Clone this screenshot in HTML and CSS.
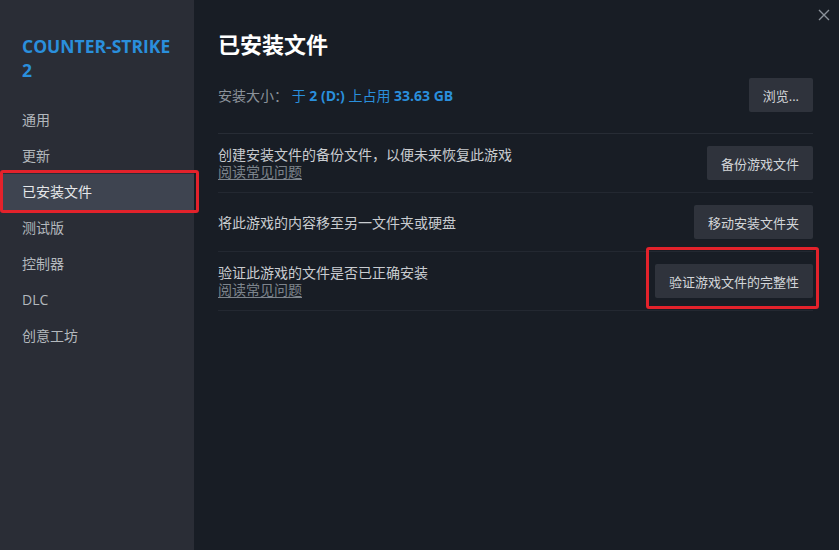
FILE: index.html
```html
<!DOCTYPE html>
<html lang="zh-CN">
<head>
<meta charset="utf-8">
<title>已安装文件</title>
<link rel="stylesheet" href="styles.css">
</head>
<body>
<div class="window">
  <aside class="sidebar">
    <div class="game-title"><span class="nowrap">COUNTER-STRIKE</span> 2</div>
    <nav class="nav">
      <div class="nav-item">通用</div>
      <div class="nav-item">更新</div>
      <div class="nav-item active">已安装文件</div>
      <div class="nav-item">测试版</div>
      <div class="nav-item">控制器</div>
      <div class="nav-item">DLC</div>
      <div class="nav-item">创意工坊</div>
    </nav>
  </aside>
  <main class="main">
    <h1 class="page-title">已安装文件</h1>
    <div class="size-row">
      <div class="size-text"><span class="size-label">安装大小：</span> <span class="size-value">于 <b>2 (D:)</b> 上占用 <b>33.63 GB</b></span></div>
      <button class="btn">浏览...</button>
    </div>
    <div class="rows">
      <div class="row">
        <div class="row-text">
          <div class="desc">创建安装文件的备份文件，以便未来恢复此游戏</div>
          <a class="faq">阅读常见问题</a>
        </div>
        <button class="btn">备份游戏文件</button>
      </div>
      <div class="row">
        <div class="row-text">
          <div class="desc">将此游戏的内容移至另一文件夹或硬盘</div>
        </div>
        <button class="btn">移动安装文件夹</button>
      </div>
      <div class="row">
        <div class="row-text">
          <div class="desc">验证此游戏的文件是否已正确安装</div>
          <a class="faq">阅读常见问题</a>
        </div>
        <span class="highlight"><button class="btn">验证游戏文件的完整性</button></span>
      </div>
    </div>
  </main>
  <button class="close" aria-label="关闭">
    <svg width="12" height="12" viewBox="0 0 12 12"><path d="M1 1 L11 11 M11 1 L1 11" stroke="#8b929a" stroke-width="1.4" fill="none"/></svg>
  </button>
</div>
</body>
</html>
```
FILE: styles.css
```css
* { box-sizing: border-box; }
html, body {
  margin: 0;
  padding: 0;
  background: #181d25;
}
body {
  font-family: "Open Sans", "Noto Sans CJK SC", sans-serif;
  width: 839px;
  height: 550px;
  overflow: hidden;
}
.window {
  position: relative;
  display: flex;
  width: 839px;
  height: 550px;
}
.sidebar {
  width: 194px;
  flex: none;
  background: #2a2d36;
  padding-top: 34px;
  position: relative;
  z-index: 2;
}
.game-title {
  color: #2a8fdc;
  font-weight: 700;
  font-size: 17.5px;
  line-height: 24px;
  padding: 0 12px 0 22px;
}
.nowrap { white-space: nowrap; }
.nav {
  margin-top: 20px;
  display: flex;
  flex-direction: column;
}
.nav-item {
  height: 36px;
  line-height: 36px;
  padding-left: 22px;
  font-size: 14px;
  color: #b3b8bd;
  position: relative;
}
.nav-item.active {
  background: #3e4450;
  color: #e6e8ea;
}
.nav-item.active::after {
  content: "";
  position: absolute;
  left: 0;
  right: -5px;
  top: -4px;
  bottom: -3px;
  border: 3.5px solid #e3222b;
  border-radius: 3px;
}
.main {
  flex: 1;
  padding: 29px 26px 0 24px;
}
.page-title {
  margin: 0;
  font-size: 22px;
  line-height: 30px;
  font-weight: 700;
  color: #ffffff;
}
.size-row {
  display: flex;
  align-items: center;
  justify-content: space-between;
  margin-top: 19px;
  padding-bottom: 21px;
  border-bottom: 1px solid #272c35;
}
.size-text {
  font-size: 14px;
  line-height: 17px;
}
.size-label { color: #8b929a; }
.size-value { color: #2a8fdc; }
.size-value b { font-weight: 700; }
.btn {
  font-family: inherit;
  font-size: 13px;
  color: #d3d6d9;
  background: #2f333c;
  border: none;
  border-radius: 2px;
  height: 34px;
  padding: 0 14px;
  white-space: nowrap;
}
.rows { display: flex; flex-direction: column; }
.row {
  display: flex;
  align-items: center;
  justify-content: space-between;
  padding: 12px 0;
  min-height: 58px;
  border-bottom: 1px solid #232831;
}
.row-text {
  font-size: 14px;
  line-height: 17px;
}
.desc { color: #c9ccd0; }
.faq {
  color: #7d848c;
  text-decoration: underline;
  text-underline-offset: 2px;
}
.highlight {
  position: relative;
  display: inline-flex;
}
.highlight::after {
  content: "";
  position: absolute;
  left: -9px;
  right: -6px;
  top: -17px;
  bottom: -11px;
  border: 3.5px solid #e3222b;
  border-radius: 3px;
}
.close {
  position: absolute;
  top: 9px;
  right: 9px;
  width: 12px;
  height: 12px;
  padding: 0;
  border: none;
  background: none;
  display: flex;
}
```
